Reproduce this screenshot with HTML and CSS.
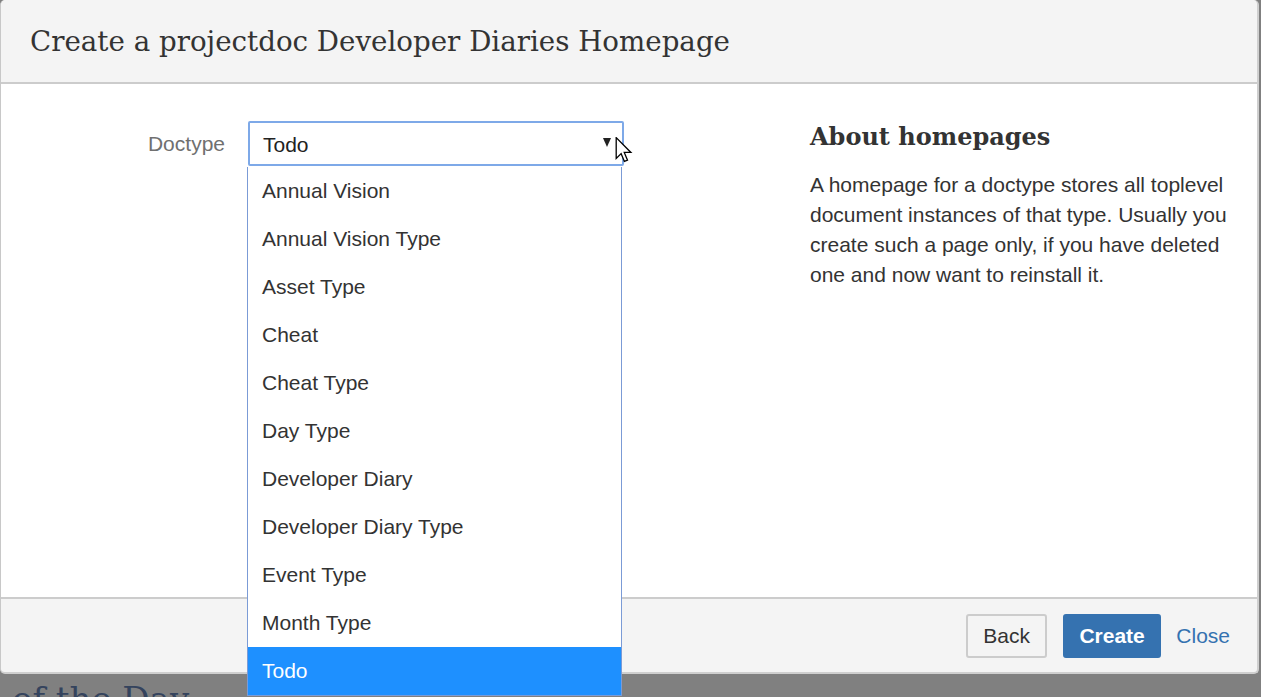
FILE: index.html
```html
<!DOCTYPE html>
<html lang="en">
<head>
<meta charset="utf-8">
<title>Create a projectdoc Developer Diaries Homepage</title>
<link rel="stylesheet" href="styles.css">
</head>
<body>
<div class="dialog">
  <div class="dialog-header">
    <h2 class="dialog-title">Create a projectdoc Developer Diaries Homepage</h2>
  </div>
  <div class="dialog-body">
    <div class="form-col">
      <div class="field">
        <label class="field-label">Doctype</label>
        <div class="select-wrap">
          <div class="select">
            <span class="select-value">Todo</span>
            <span class="select-arrow"></span>
          </div>
          <ul class="options">
            <li>Annual Vision</li>
            <li>Annual Vision Type</li>
            <li>Asset Type</li>
            <li>Cheat</li>
            <li>Cheat Type</li>
            <li>Day Type</li>
            <li>Developer Diary</li>
            <li>Developer Diary Type</li>
            <li>Event Type</li>
            <li>Month Type</li>
            <li class="selected">Todo</li>
          </ul>
          <svg class="cursor" width="20" height="26" viewBox="0 0 13 20">
            <path d="M0.5 0.5 L0.5 16.5 L4.3 12.8 L6.8 18.8 L9.2 17.8 L6.7 11.9 L11.8 11.9 Z" fill="#fff" stroke="#000" stroke-width="1" stroke-linejoin="miter"/>
          </svg>
        </div>
      </div>
    </div>
    <div class="aside">
      <h3 class="aside-title">About homepages</h3>
      <p class="aside-text">A homepage for a doctype stores all toplevel document instances of that type. Usually you create such a page only, if you have deleted one and now want to reinstall it.</p>
    </div>
  </div>
  <div class="dialog-footer">
    <button class="btn">Back</button>
    <button class="btn btn-primary">Create</button>
    <a class="btn-link" href="#">Close</a>
  </div>
</div>
<h1 class="page-title">of the Day</h1>
</body>
</html>
```

FILE: styles.css
```css
html, body {
  margin: 0;
  padding: 0;
}
body {
  background: #808080;
  font-family: "Liberation Sans", Arial, sans-serif;
  color: #333;
  overflow: hidden;
  height: 697px;
}
.dialog {
  width: 1259px;
  box-sizing: border-box;
  border-left: 1px solid #c8c8c8;
  border-right: 2px solid #cfcfcf;
  border-bottom: 2px solid #cfcfcf;
  border-radius: 5px;
  background: #f4f4f4;
  position: relative;
  z-index: 1;
}
.dialog-header {
  height: 82px;
  border-bottom: 2px solid #cccccc;
  background: #f4f4f4;
  border-radius: 5px 5px 0 0;
  display: flex;
  align-items: center;
  padding-left: 29px;
}
.dialog-title {
  margin: 0;
  font-family: "DejaVu Serif", Georgia, serif;
  font-weight: normal;
  font-size: 27.7px;
  color: #333;
  position: relative;
  top: 0px;
}
.dialog-body {
  background: #fff;
  height: 513px;
  display: flex;
  box-sizing: border-box;
  padding-top: 37px;
}
.form-col {
  width: 809px;
}
.field {
  display: flex;
  align-items: flex-start;
}
.field-label {
  width: 224px;
  text-align: right;
  padding-right: 23px;
  font-size: 21px;
  color: #707070;
  line-height: 45px;
}
.select-wrap {
  position: relative;
  width: 376px;
}
.select {
  height: 45px;
  box-sizing: border-box;
  border: 2px solid #7ea9e8;
  border-radius: 2px;
  background: #fff;
  display: flex;
  align-items: center;
  padding-left: 13px;
  padding-right: 11px;
}
.select-value {
  flex: 1;
  font-size: 21px;
  color: #222;
  position: relative;
  top: 1px;
}
.select-arrow {
  width: 0;
  height: 0;
  border-left: 4.5px solid transparent;
  border-right: 4.5px solid transparent;
  border-top: 9px solid #222;
  margin-top: -3px;
}
.options {
  position: absolute;
  left: -1px;
  top: 46px;
  width: 375px;
  box-sizing: border-box;
  margin: 0;
  padding: 0;
  list-style: none;
  background: #fff;
  border: 1px solid #7b9bd6;
  border-top: none;
  z-index: 5;
}
.options li {
  height: 48px;
  line-height: 48px;
  padding-left: 14px;
  font-size: 21px;
  color: #333;
}
.options li.selected {
  background: #1e90ff;
  color: #fff;
}
.cursor {
  position: absolute;
  left: 366px;
  top: 16px;
  z-index: 6;
}
.aside {
  flex: 1;
  padding-right: 20px;
}
.aside-title {
  margin: 0;
  font-family: "DejaVu Serif", Georgia, serif;
  font-weight: bold;
  font-size: 24px;
  color: #333;
  line-height: 30px;
  position: relative;
  top: 1px;
}
.aside-text {
  margin: 19px 0 0;
  font-size: 21px;
  line-height: 30px;
  color: #333;
  width: 425px;
}
.dialog-footer {
  height: 73px;
  border-top: 2px solid #cccccc;
  background: #f4f4f4;
  border-radius: 0 0 5px 5px;
  display: flex;
  align-items: center;
  justify-content: flex-end;
  padding-right: 27px;
  gap: 16px;
}
.btn {
  height: 44px;
  box-sizing: border-box;
  border: 2px solid #cccccc;
  border-radius: 3px;
  background: #f4f4f4;
  font-family: "Liberation Sans", Arial, sans-serif;
  font-size: 21px;
  color: #333;
  padding: 0 15px;
  margin-top: 1px;
}
.btn-primary {
  background: #3572b0;
  border-color: #3572b0;
  color: #fff;
  font-weight: bold;
  padding: 0 14.5px;
}
.btn-link {
  font-size: 21px;
  color: #3572b0;
  text-decoration: none;
  margin-left: -1px;
  margin-top: 1px;
}
.page-title {
  margin: 0;
  padding-left: 12px;
  font-family: "DejaVu Serif", Georgia, serif;
  font-weight: normal;
  font-size: 34px;
  color: #34435d;
  line-height: 50px;
  margin-top: 0px;
}
```
